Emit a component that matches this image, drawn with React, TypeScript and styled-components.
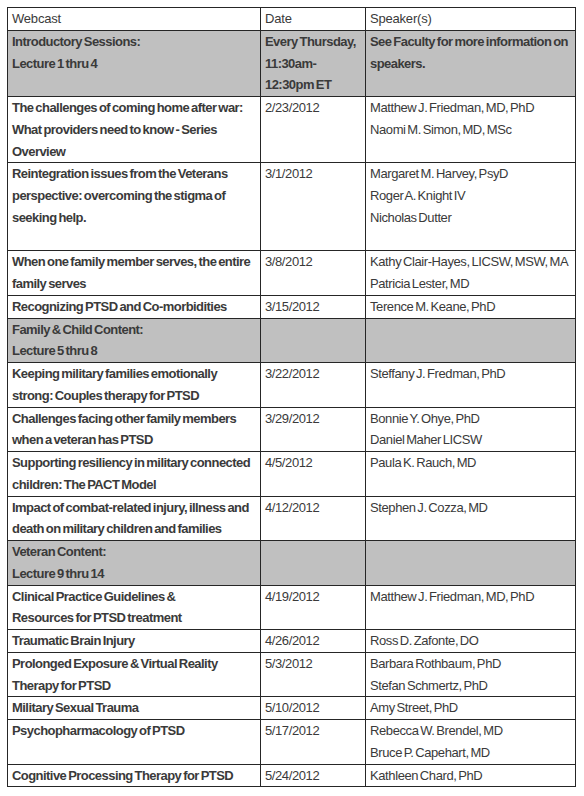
import React from 'react'
import styled, { createGlobalStyle } from 'styled-components'

const GlobalStyle = createGlobalStyle`
	html, body {
		margin: 0;
		padding: 0;
		background: #ffffff;
	}
`

const Page = styled.div`
	padding: 7px 9px 7px 7px;
	font-family: "Liberation Sans", Arial, sans-serif;
	font-size: 13px;
	color: #3a3a3a;
`

const Table = styled.table`
	border-collapse: collapse;
	table-layout: fixed;
	width: 568px;
	border: 1px solid #262626;
`

const Col = styled.col<{ w: number }>`
	width: ${({ w }) => w}px;
`

const Row = styled.tr<{ shaded?: boolean }>`
	background: ${({ shaded }) => (shaded ? '#c0c0c0' : '#ffffff')};
`

const Cell = styled.td<{ bold?: boolean }>`
	border: 1px solid #262626;
	padding: 0 4px;
	vertical-align: top;
	line-height: 21.75px;
	font-weight: ${({ bold }) => (bold ? 700 : 400)};
	letter-spacing: ${({ bold }) => (bold ? '-0.55px' : '-0.4px')};
	word-spacing: ${({ bold }) => (bold ? '-1.2px' : '-1.5px')};
	white-space: nowrap;
	overflow: hidden;
`

const HeadCell = styled(Cell).attrs({ as: 'th' })`
	text-align: left;
	font-weight: 400;
	letter-spacing: -0.2px;
`

const Line = styled.div`
	min-height: 21.75px;
`

interface Session {
	title: string[]
	date: string[]
	speakers: string[]
	section?: boolean
}

const sessions: Session[] = [
	{
		section: true,
		title: ['Introductory Sessions:', 'Lecture 1 thru 4'],
		date: ['Every Thursday,', '11:30am-', '12:30pm ET'],
		speakers: ['See Faculty for more information on', 'speakers.'],
	},
	{
		title: ['The challenges of coming home after war:', 'What providers need to know - Series', 'Overview'],
		date: ['2/23/2012'],
		speakers: ['Matthew J. Friedman, MD, PhD', 'Naomi M. Simon, MD, MSc'],
	},
	{
		title: ['Reintegration issues from the Veterans', 'perspective: overcoming the stigma of', 'seeking help.'],
		date: ['3/1/2012'],
		speakers: ['Margaret M. Harvey, PsyD', 'Roger A. Knight IV', 'Nicholas Dutter', ''],
	},
	{
		title: ['When one family member serves, the entire', 'family serves'],
		date: ['3/8/2012'],
		speakers: ['Kathy Clair-Hayes, LICSW, MSW, MA', 'Patricia Lester, MD'],
	},
	{
		title: ['Recognizing PTSD and Co-morbidities'],
		date: ['3/15/2012'],
		speakers: ['Terence M. Keane, PhD'],
	},
	{
		section: true,
		title: ['Family & Child Content:', 'Lecture 5 thru 8'],
		date: [],
		speakers: [],
	},
	{
		title: ['Keeping military families emotionally', 'strong: Couples therapy for PTSD'],
		date: ['3/22/2012'],
		speakers: ['Steffany J. Fredman, PhD'],
	},
	{
		title: ['Challenges facing other family members', 'when a veteran has PTSD'],
		date: ['3/29/2012'],
		speakers: ['Bonnie Y. Ohye, PhD', 'Daniel Maher LICSW'],
	},
	{
		title: ['Supporting resiliency in military connected', 'children: The PACT Model'],
		date: ['4/5/2012'],
		speakers: ['Paula K. Rauch, MD'],
	},
	{
		title: ['Impact of combat-related injury, illness and', 'death on military children and families'],
		date: ['4/12/2012'],
		speakers: ['Stephen J. Cozza, MD'],
	},
	{
		section: true,
		title: ['Veteran Content:', 'Lecture 9 thru 14'],
		date: [],
		speakers: [],
	},
	{
		title: ['Clinical Practice Guidelines &', 'Resources for PTSD treatment'],
		date: ['4/19/2012'],
		speakers: ['Matthew J. Friedman, MD, PhD'],
	},
	{
		title: ['Traumatic Brain Injury'],
		date: ['4/26/2012'],
		speakers: ['Ross D. Zafonte, DO'],
	},
	{
		title: ['Prolonged Exposure & Virtual Reality', 'Therapy for PTSD'],
		date: ['5/3/2012'],
		speakers: ['Barbara Rothbaum, PhD', 'Stefan Schmertz, PhD'],
	},
	{
		title: ['Military Sexual Trauma'],
		date: ['5/10/2012'],
		speakers: ['Amy Street, PhD'],
	},
	{
		title: ['Psychopharmacology of PTSD'],
		date: ['5/17/2012'],
		speakers: ['Rebecca W. Brendel, MD', 'Bruce P. Capehart, MD'],
	},
	{
		title: ['Cognitive Processing Therapy for PTSD'],
		date: ['5/24/2012'],
		speakers: ['Kathleen Chard, PhD'],
	},
]

const Lines = ({ items }: { items: string[] }) => <>
	{items.map((t, i) => <Line key={i}>{t || '\u00a0'}</Line>)}
</>

export default function App() {
	return <>
		<GlobalStyle />
		<Page>
			<Table>
				<colgroup>
					<Col w={253} />
					<Col w={105} />
					<Col w={210} />
				</colgroup>
				<thead>
					<Row>
						<HeadCell>Webcast</HeadCell>
						<HeadCell>Date</HeadCell>
						<HeadCell>Speaker(s)</HeadCell>
					</Row>
				</thead>
				<tbody>
					{sessions.map((s, i) => (
						<Row key={i} shaded={s.section}>
							<Cell bold><Lines items={s.title} /></Cell>
							<Cell bold={s.section}><Lines items={s.date} /></Cell>
							<Cell bold={s.section}><Lines items={s.speakers} /></Cell>
						</Row>
					))}
				</tbody>
			</Table>
		</Page>
	</>
}
